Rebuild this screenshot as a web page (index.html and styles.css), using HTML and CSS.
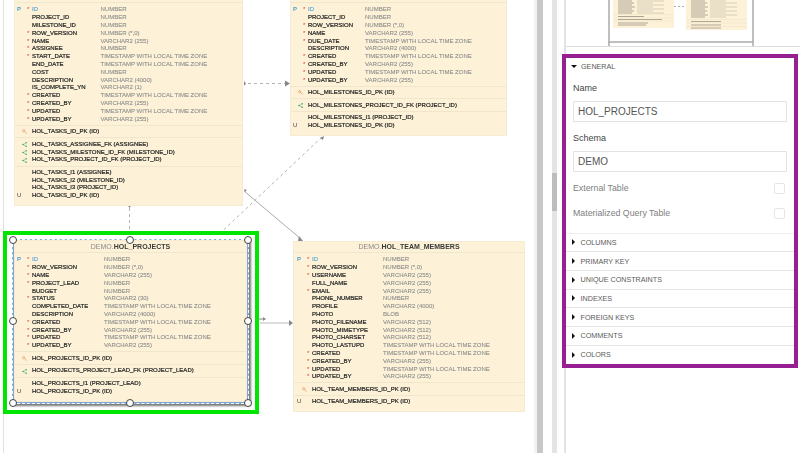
FILE: index.html
```html
<!DOCTYPE html>
<html lang="en">
<head>
<meta charset="utf-8">
<title>Data Modeler</title>
<link rel="stylesheet" href="styles.css">
</head>
<body>
<svg class="defs" width="0" height="0" aria-hidden="true">
  <symbol id="key" viewBox="0 0 6 6"><circle cx="2" cy="2" r="1.3" fill="none" stroke="#ee9a66" stroke-width="1"/><path d="M3 3l2.6 2.4M4.4 4.2l-.8.8" fill="none" stroke="#ee9a66" stroke-width=".9"/></symbol>
  <symbol id="fk" viewBox="0 0 6 6"><path d="M5 1L1.5 3 5 5" fill="none" stroke="#5fb98c" stroke-width=".7"/><circle cx="1.3" cy="3" r="1" fill="#37a86f"/><circle cx="5" cy="1" r=".9" fill="#37a86f"/><circle cx="5" cy="5" r=".9" fill="#37a86f"/></symbol>
</svg>
<div class="app">
  <main class="canvas">
    <svg class="links" width="531" height="453" aria-hidden="true">
      <path class="dash" d="M245 83.500H284"/>
      <path class="dash" d="M126.500 208V236"/>
      <path class="dash" d="M319 137L212 238"/>
      <path class="thin" d="M241 191L298 239"/>
      <path class="thick" d="M257 323H287"/>
      <path class="head" d="M282 80.500v6l5-3zM241 189l3 1-2 2zM241 81v5l2-2.500zM124.500 205h4l-2 3zM317 138l4-2-1 4zM210 235h4v3zM296 236l4 5h-5zM286 320v6l4-3zM256 318.500h4v-1.500l3 2-3 2v-1.500h-4zM249 323h3v2h-3z"/>
    </svg>

    <section class="tbl t-tasks">
      <h2 class="title"><span class="owner">DEMO.</span>HOL_TASKS</h2>
      <div class="sec cols">
        <div class="row"><i class="k pk">P</i><i class="s">*</i><b class="pkname">ID</b><span class="ty">NUMBER</span></div>
        <div class="row"><i class="k"></i><i class="s"></i><b>PROJECT_ID</b><span class="ty">NUMBER</span></div>
        <div class="row"><i class="k"></i><i class="s"></i><b>MILESTONE_ID</b><span class="ty">NUMBER</span></div>
        <div class="row"><i class="k"></i><i class="s">*</i><b>ROW_VERSION</b><span class="ty">NUMBER (*,0)</span></div>
        <div class="row"><i class="k"></i><i class="s">*</i><b>NAME</b><span class="ty">VARCHAR2 (255)</span></div>
        <div class="row"><i class="k"></i><i class="s">*</i><b>ASSIGNEE</b><span class="ty">NUMBER</span></div>
        <div class="row"><i class="k"></i><i class="s">*</i><b>START_DATE</b><span class="ty">TIMESTAMP WITH LOCAL TIME ZONE</span></div>
        <div class="row"><i class="k"></i><i class="s"></i><b>END_DATE</b><span class="ty">TIMESTAMP WITH LOCAL TIME ZONE</span></div>
        <div class="row"><i class="k"></i><i class="s"></i><b>COST</b><span class="ty">NUMBER</span></div>
        <div class="row"><i class="k"></i><i class="s"></i><b>DESCRIPTION</b><span class="ty">VARCHAR2 (4000)</span></div>
        <div class="row"><i class="k"></i><i class="s"></i><b>IS_COMPLETE_YN</b><span class="ty">VARCHAR2 (1)</span></div>
        <div class="row"><i class="k"></i><i class="s">*</i><b>CREATED</b><span class="ty">TIMESTAMP WITH LOCAL TIME ZONE</span></div>
        <div class="row"><i class="k"></i><i class="s">*</i><b>CREATED_BY</b><span class="ty">VARCHAR2 (255)</span></div>
        <div class="row"><i class="k"></i><i class="s">*</i><b>UPDATED</b><span class="ty">TIMESTAMP WITH LOCAL TIME ZONE</span></div>
        <div class="row"><i class="k"></i><i class="s">*</i><b>UPDATED_BY</b><span class="ty">VARCHAR2 (255)</span></div>
      </div>
      <div class="sec">
        <div class="line"><svg class="ico"><use href="#key"/></svg><b>HOL_TASKS_ID_PK (ID)</b></div>
      </div>
      <div class="sec">
        <div class="line"><svg class="ico"><use href="#fk"/></svg><b>HOL_TASKS_ASSIGNEE_FK (ASSIGNEE)</b></div>
        <div class="line"><svg class="ico"><use href="#fk"/></svg><b>HOL_TASKS_MILESTONE_ID_FK (MILESTONE_ID)</b></div>
        <div class="line"><svg class="ico"><use href="#fk"/></svg><b>HOL_TASKS_PROJECT_ID_FK (PROJECT_ID)</b></div>
      </div>
      <div class="sec last">
        <div class="line"><i class="u"></i><b>HOL_TASKS_I1 (ASSIGNEE)</b></div>
        <div class="line"><i class="u"></i><b>HOL_TASKS_I2 (MILESTONE_ID)</b></div>
        <div class="line"><i class="u"></i><b>HOL_TASKS_I3 (PROJECT_ID)</b></div>
        <div class="line"><i class="u">U</i><b>HOL_TASKS_ID_PK (ID)</b></div>
      </div>
    </section>

    <section class="tbl t-miles">
      <h2 class="title"><span class="owner">DEMO.</span>HOL_MILESTONES</h2>
      <div class="sec cols">
        <div class="row"><i class="k pk">P</i><i class="s">*</i><b class="pkname">ID</b><span class="ty">NUMBER</span></div>
        <div class="row"><i class="k"></i><i class="s"></i><b>PROJECT_ID</b><span class="ty">NUMBER</span></div>
        <div class="row"><i class="k"></i><i class="s">*</i><b>ROW_VERSION</b><span class="ty">NUMBER (*,0)</span></div>
        <div class="row"><i class="k"></i><i class="s">*</i><b>NAME</b><span class="ty">VARCHAR2 (255)</span></div>
        <div class="row"><i class="k"></i><i class="s">*</i><b>DUE_DATE</b><span class="ty">TIMESTAMP WITH LOCAL TIME ZONE</span></div>
        <div class="row"><i class="k"></i><i class="s"></i><b>DESCRIPTION</b><span class="ty">VARCHAR2 (4000)</span></div>
        <div class="row"><i class="k"></i><i class="s">*</i><b>CREATED</b><span class="ty">TIMESTAMP WITH LOCAL TIME ZONE</span></div>
        <div class="row"><i class="k"></i><i class="s">*</i><b>CREATED_BY</b><span class="ty">VARCHAR2 (255)</span></div>
        <div class="row"><i class="k"></i><i class="s">*</i><b>UPDATED</b><span class="ty">TIMESTAMP WITH LOCAL TIME ZONE</span></div>
        <div class="row"><i class="k"></i><i class="s">*</i><b>UPDATED_BY</b><span class="ty">VARCHAR2 (255)</span></div>
      </div>
      <div class="sec">
        <div class="line"><svg class="ico"><use href="#key"/></svg><b>HOL_MILESTONES_ID_PK (ID)</b></div>
      </div>
      <div class="sec">
        <div class="line"><svg class="ico"><use href="#fk"/></svg><b>HOL_MILESTONES_PROJECT_ID_FK (PROJECT_ID)</b></div>
      </div>
      <div class="sec last">
        <div class="line"><i class="u"></i><b>HOL_MILESTONES_I1 (PROJECT_ID)</b></div>
        <div class="line"><i class="u">U</i><b>HOL_MILESTONES_ID_PK (ID)</b></div>
      </div>
    </section>

    <div class="mark"></div>
    <div class="selection">
      <i class="h h-tl"></i><i class="h h-tc"></i><i class="h h-tr"></i>
      <i class="h h-ml"></i><i class="h h-mr"></i>
      <i class="h h-bl"></i><i class="h h-bc"></i><i class="h h-br"></i>
    </div>

    <section class="tbl t-proj">
      <h2 class="title"><span class="owner">DEMO.</span>HOL_PROJECTS</h2>
      <div class="sec cols">
        <div class="row"><i class="k pk">P</i><i class="s">*</i><b class="pkname">ID</b><span class="ty">NUMBER</span></div>
        <div class="row"><i class="k"></i><i class="s">*</i><b>ROW_VERSION</b><span class="ty">NUMBER (*,0)</span></div>
        <div class="row"><i class="k"></i><i class="s">*</i><b>NAME</b><span class="ty">VARCHAR2 (255)</span></div>
        <div class="row"><i class="k"></i><i class="s">*</i><b>PROJECT_LEAD</b><span class="ty">NUMBER</span></div>
        <div class="row"><i class="k"></i><i class="s"></i><b>BUDGET</b><span class="ty">NUMBER</span></div>
        <div class="row"><i class="k"></i><i class="s">*</i><b>STATUS</b><span class="ty">VARCHAR2 (30)</span></div>
        <div class="row"><i class="k"></i><i class="s"></i><b>COMPLETED_DATE</b><span class="ty">TIMESTAMP WITH LOCAL TIME ZONE</span></div>
        <div class="row"><i class="k"></i><i class="s"></i><b>DESCRIPTION</b><span class="ty">VARCHAR2 (4000)</span></div>
        <div class="row"><i class="k"></i><i class="s">*</i><b>CREATED</b><span class="ty">TIMESTAMP WITH LOCAL TIME ZONE</span></div>
        <div class="row"><i class="k"></i><i class="s">*</i><b>CREATED_BY</b><span class="ty">VARCHAR2 (255)</span></div>
        <div class="row"><i class="k"></i><i class="s">*</i><b>UPDATED</b><span class="ty">TIMESTAMP WITH LOCAL TIME ZONE</span></div>
        <div class="row"><i class="k"></i><i class="s">*</i><b>UPDATED_BY</b><span class="ty">VARCHAR2 (255)</span></div>
      </div>
      <div class="sec">
        <div class="line"><svg class="ico"><use href="#key"/></svg><b>HOL_PROJECTS_ID_PK (ID)</b></div>
      </div>
      <div class="sec">
        <div class="line"><svg class="ico"><use href="#fk"/></svg><b>HOL_PROJECTS_PROJECT_LEAD_FK (PROJECT_LEAD)</b></div>
      </div>
      <div class="sec last">
        <div class="line"><i class="u"></i><b>HOL_PROJECTS_I1 (PROJECT_LEAD)</b></div>
        <div class="line"><i class="u">U</i><b>HOL_PROJECTS_ID_PK (ID)</b></div>
      </div>
    </section>

    <section class="tbl t-team">
      <h2 class="title"><span class="owner">DEMO.</span>HOL_TEAM_MEMBERS</h2>
      <div class="sec cols">
        <div class="row"><i class="k pk">P</i><i class="s">*</i><b class="pkname">ID</b><span class="ty">NUMBER</span></div>
        <div class="row"><i class="k"></i><i class="s">*</i><b>ROW_VERSION</b><span class="ty">NUMBER (*,0)</span></div>
        <div class="row"><i class="k"></i><i class="s">*</i><b>USERNAME</b><span class="ty">VARCHAR2 (255)</span></div>
        <div class="row"><i class="k"></i><i class="s"></i><b>FULL_NAME</b><span class="ty">VARCHAR2 (255)</span></div>
        <div class="row"><i class="k"></i><i class="s">*</i><b>EMAIL</b><span class="ty">VARCHAR2 (255)</span></div>
        <div class="row"><i class="k"></i><i class="s"></i><b>PHONE_NUMBER</b><span class="ty">NUMBER</span></div>
        <div class="row"><i class="k"></i><i class="s"></i><b>PROFILE</b><span class="ty">VARCHAR2 (4000)</span></div>
        <div class="row"><i class="k"></i><i class="s"></i><b>PHOTO</b><span class="ty">BLOB</span></div>
        <div class="row"><i class="k"></i><i class="s"></i><b>PHOTO_FILENAME</b><span class="ty">VARCHAR2 (512)</span></div>
        <div class="row"><i class="k"></i><i class="s"></i><b>PHOTO_MIMETYPE</b><span class="ty">VARCHAR2 (512)</span></div>
        <div class="row"><i class="k"></i><i class="s"></i><b>PHOTO_CHARSET</b><span class="ty">VARCHAR2 (512)</span></div>
        <div class="row"><i class="k"></i><i class="s"></i><b>PHOTO_LASTUPD</b><span class="ty">TIMESTAMP WITH LOCAL TIME ZONE</span></div>
        <div class="row"><i class="k"></i><i class="s">*</i><b>CREATED</b><span class="ty">TIMESTAMP WITH LOCAL TIME ZONE</span></div>
        <div class="row"><i class="k"></i><i class="s">*</i><b>CREATED_BY</b><span class="ty">VARCHAR2 (255)</span></div>
        <div class="row"><i class="k"></i><i class="s">*</i><b>UPDATED</b><span class="ty">TIMESTAMP WITH LOCAL TIME ZONE</span></div>
        <div class="row"><i class="k"></i><i class="s">*</i><b>UPDATED_BY</b><span class="ty">VARCHAR2 (255)</span></div>
      </div>
      <div class="sec">
        <div class="line"><svg class="ico"><use href="#key"/></svg><b>HOL_TEAM_MEMBERS_ID_PK (ID)</b></div>
      </div>
      <div class="sec last">
        <div class="line"><i class="u">U</i><b>HOL_TEAM_MEMBERS_ID_PK (ID)</b></div>
      </div>
    </section>
  </main>

  <div class="split-edge"></div>
  <div class="split-bar"></div>
  <div class="split-gap"></div>
  <div class="scroll"><div class="scroll-thumb"></div></div>
  <div class="scroll-gap"></div>

  <aside class="side">
    <div class="minimap">
      <svg class="mini" width="234" height="47" aria-hidden="true">
        <rect class="mini-tbl" x="47" y="0" width="61" height="28"/>
        <rect class="mini-tbl" x="120" y="0" width="61" height="30"/>
        <path class="mini-name" d="M52 1h14M52 3h16M52 5h14M52 7h17M52 9h14M52 11h16M52 13h14M125 1h14M125 3h16M125 5h14M125 7h17M125 9h14M125 11h16M125 13h14M125 15h17M125 17h14"/>
        <path class="mini-type" d="M71 1h27M71 3h16M71 5h27M71 7h16M71 9h27M71 11h16M71 13h27M144 1h16M144 3h27M144 5h16M144 7h27M144 9h16M144 11h27M144 13h16M144 15h27M144 17h16"/>
        <path class="mini-sep" d="M47 14.500h61M47 18h61M47 21h61M120 19.500h61M120 23h61M120 26.500h61"/>
        <path class="mini-name" d="M52 16.500h26M52 19.500h44M52 23h30M52 25h28M125 21.500h30M125 25h30M125 28h30"/>
        <path class="mini-link" d="M108 6.500h12"/>
        <path class="mini-frame" d="M43 0V42H187V46"/>
        <path class="mini-frame" d="M187 42V0M43 42V46"/>
      </svg>
    </div>
    <div class="props">
      <div class="general">
        <div class="sec-head"><i class="tri-down"></i>GENERAL</div>
        <label class="field-label" for="f-name">Name</label>
        <input class="field" id="f-name" value="HOL_PROJECTS">
        <label class="field-label schema" for="f-schema">Schema</label>
        <input class="field" id="f-schema" value="DEMO">
        <div class="check"><span>External Table</span><i class="box"></i></div>
        <div class="check"><span>Materialized Query Table</span><i class="box"></i></div>
      </div>
      <div class="sec-head"><i class="tri-right"></i>COLUMNS</div>
      <div class="sec-head"><i class="tri-right"></i>PRIMARY KEY</div>
      <div class="sec-head"><i class="tri-right"></i>UNIQUE CONSTRAINTS</div>
      <div class="sec-head"><i class="tri-right"></i>INDEXES</div>
      <div class="sec-head"><i class="tri-right"></i>FOREIGN KEYS</div>
      <div class="sec-head"><i class="tri-right"></i>COMMENTS</div>
      <div class="sec-head"><i class="tri-right"></i>COLORS</div>
    </div>
  </aside>
</div>
</body>
</html>
```

FILE: styles.css
```css
* { box-sizing: border-box; }
html, body { margin: 0; height: 100%; background: #fff; overflow: hidden; }
body { font-family: "Liberation Sans", Arial, sans-serif; color: #333; }
.defs { position: absolute; }
.app { display: flex; height: 453px; width: 800px; padding-left: 3px; overflow: hidden; }

/* diagram */
.canvas { position: relative; width: 531px; height: 453px; flex: none; overflow: hidden; box-shadow: inset 1px 0 #e2e2e2; }
.links { position: absolute; left: 0; top: 0; }
.dash { fill: none; stroke: #b4b4b4; stroke-width: 1; stroke-dasharray: 3 3; }
.thin { fill: none; stroke: #aaa; stroke-width: 1; }
.thick { fill: none; stroke: #ddd; stroke-width: 2; }
.head { fill: #888; }

.tbl { position: absolute; z-index: 1; background: #fdf2d8; border: 1px solid #f6ecd4; font-size: 6px; --name: 72px; filter: blur(.3px); }
.t-tasks { left: 11px; top: -10px; width: 229px; --name: 68.5px; }
.t-miles { left: 287px; top: -10px; width: 217px; --name: 57px; }
.t-proj { left: 11px; top: 240px; width: 233px; }
.t-team { left: 290px; top: 241px; width: 232px; --name: 71px; }
.t-team .title { height: 11px; line-height: 10px; }
.t-team .row, .t-team .line { padding-left: 3px; }

.title { margin: 0; height: 12px; line-height: 12px; text-align: center; font-size: 7px; font-weight: 700; color: #3a3a3a; border-bottom: 1px solid #f0e6cc; }
.owner { font-weight: 400; color: #8a8a8a; }
.sec { padding: 2.5px 0 1.5px; border-bottom: 1px solid #f0e6cc; }
.sec.cols { padding: 3.4px 0 1.2px; }
.sec.last { padding: 2px 0 5.5px; border-bottom: 0; }
.row { display: grid; grid-template-columns: 10px 5px var(--name) 1fr; height: 7.8px; line-height: 7.8px; padding-left: 2px; white-space: nowrap; }
.line { display: flex; align-items: center; height: 7.8px; line-height: 7.8px; padding-left: 2px; white-space: nowrap; }
.row b, .line b { font-weight: 400; color: #222; -webkit-text-stroke: 0.2px #222; }
.row i, .line i { font-style: normal; }
.k { color: #555; }
.pk { color: #4d9fd6; font-weight: 700; }
.s { color: #e8302a; }
.row b.pkname { color: #4d9fd6; -webkit-text-stroke: 0.1px #4d9fd6; }
.ty { color: #8e8e8e; -webkit-text-stroke: 0.1px #8e8e8e; }
.ico { width: 5px; height: 5px; margin-left: 4.500px; margin-right: 5.500px; flex: none; }
.u { width: 15px; flex: none; color: #444; }

/* selection */
.mark { position: absolute; left: 0; top: 231px; width: 256px; height: 183px; background: #fff; border: 4px solid #00e600; }
.selection { position: absolute; left: 9px; top: 239px; width: 237px; height: 165px; background: #7aa7d6; border: 1px dashed #fff; box-shadow: 2px 2px 2px #777; }
.h { position: absolute; z-index: 3; width: 8px; height: 8px; border-radius: 50%; background: #fff; border: 1px solid #444; }
.h-tl, .h-ml, .h-bl { left: -4px; }
.h-tc, .h-bc { left: 113px; }
.h-tr, .h-mr, .h-br { right: -4px; }
.h-tl, .h-tc, .h-tr { top: -4.500px; }
.h-ml, .h-mr { top: 76.500px; }
.h-bl, .h-bc, .h-br { bottom: -4px; }

/* splitter */
.split-edge { width: 3px; background: #f2f2f2; flex: none; }
.split-bar { width: 6px; background: #c8c8c8; flex: none; }
.split-gap { width: 9px; flex: none; }
.scroll { width: 5px; background: #e4e4e4; flex: none; position: relative; }
.scroll-thumb { position: absolute; top: 173px; left: 0; width: 100%; height: 38px; background: #bdbdbd; }
.scroll-gap { width: 7px; flex: none; }

/* side */
.side { width: 236px; flex: none; border-left: 2px solid #dfe4e9; }
.minimap { height: 54px; }
.mini { display: block; border-bottom: 1px solid #ddd; height: 47px; width: 234px; filter: blur(.25px); }
.mini-tbl { fill: #fdf2d8; }
.mini-name { stroke: #8a8578; stroke-width: .7; fill: none; }
.mini-type { stroke: #c4bcaa; stroke-width: .7; fill: none; }
.mini-sep { stroke: #efe3c6; stroke-width: .6; fill: none; }
.mini-link { stroke: #aaa; stroke-width: 1; stroke-dasharray: 2 2; fill: none; }
.mini-frame { stroke: #aaa; stroke-width: 1.5; fill: none; }
.props { margin-left: -4px; width: 236px; height: 314px; border: 4px solid #962092; }
.general { height: 175.500px; padding: 0 7px; border-bottom: 1.5px solid #eee; }
.general .sec-head { margin: 0 -7px; border-bottom: 0; height: 16px; }
.sec-head { display: flex; align-items: center; height: 18.7px; padding-left: 5px; font-size: 7.2px; color: #5a5a5a; border-bottom: 1px solid #e4e4e4; }
.sec-head:last-child { border-bottom: 0; }
.tri-right { width: 0; height: 0; border-left: 3.500px solid #111; border-top: 3px solid transparent; border-bottom: 3px solid transparent; margin-right: 5.500px; margin-left: 1px; }
.tri-down { width: 0; height: 0; border-top: 3px solid #111; border-left: 3px solid transparent; border-right: 3px solid transparent; margin-right: 4px; }
.field-label { display: block; font-size: 9px; line-height: 11px; color: #444; margin-top: 8.500px; }
.field-label.schema { margin-top: 10.500px; }
.field { display: block; width: 214px; height: 21px; margin: 7.500px 0 0; padding: 0 4px; border: 1px solid #e2e2e2; background: #fff; font: 10px "Liberation Sans", Arial, sans-serif; color: #555; outline: 0; border-radius: 1px; }
.check { display: flex; align-items: center; justify-content: space-between; height: 11px; margin-top: 10.500px; padding-right: 2px; font-size: 8.800px; color: #808080; }
.check + .check { margin-top: 14px; }
.box { width: 11px; height: 11px; border: 1px solid #e6e6e6; border-radius: 2px; }
```
